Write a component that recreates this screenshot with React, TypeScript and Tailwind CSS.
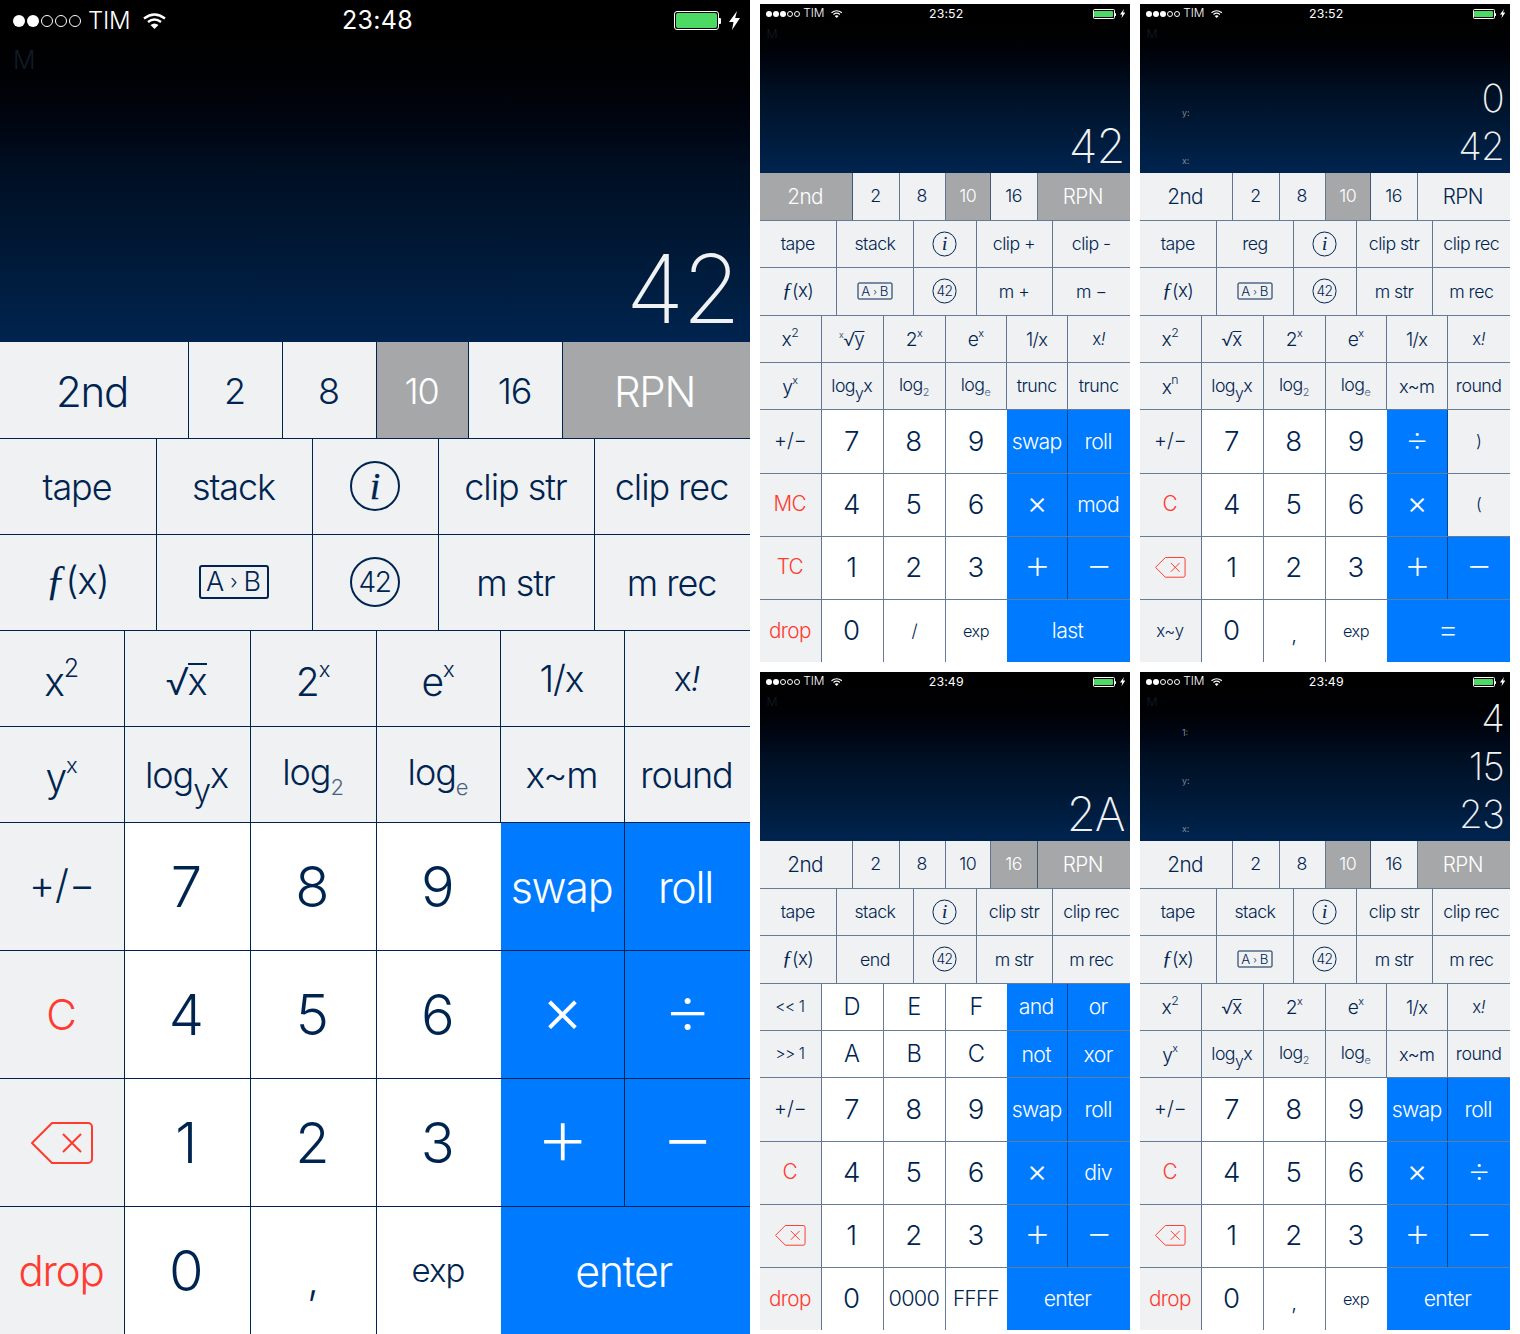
import React, { ReactNode } from "react";

type Kind = "fn" | "num" | "op" | "sel" | "red";
type C = [Kind, ReactNode, string?];

const KIND: Record<Kind, string> = {
  fn: "bg-[#f0f1f3] text-[#002450]",
  num: "bg-white text-[#002450]",
  op: "bg-[#007aff] text-white",
  sel: "bg-[#a6a7a9] text-white",
  red: "bg-[#f0f1f3] text-[#ff3b30]",
};

const W_TOP = ["w-[189px]", "w-[94px]", "w-[94px]", "w-[92px]", "w-[94px]", "flex-1"];
const W_5 = ["w-[157px]", "w-[156px]", "w-[126px]", "w-[156px]", "flex-1"];
const W_6 = ["w-[125px]", "w-[126px]", "w-[126px]", "w-[124px]", "w-[124px]", "flex-1"];
const W_LAST = ["w-[125px]", "w-[126px]", "w-[126px]", "w-[124px]", "flex-1"];

const Sup = ({ children, s = "text-[22px]" }: { children: ReactNode; s?: string }) => (
  <span className={`relative -top-[19px] ${s}`}>{children}</span>
);
const Sub = ({ children, s = "text-[22px]", t = "top-[10px]", c = "" }: { children: ReactNode; s?: string; t?: string; c?: string }) => (
  <span className={`relative ${t} ${s} ${c}`}>{children}</span>
);

const Info = () => (
  <span className="flex h-[50px] w-[50px] -translate-y-[1px] items-center justify-center rounded-full border-2 border-current">
    <span className="[font-family:'Liberation_Serif',serif] text-[38px] font-normal italic [-webkit-text-stroke:0.3px_currentColor]">i</span>
  </span>
);
const Circle42 = () => (
  <span className="flex h-[50px] w-[50px] -translate-y-[1px] items-center justify-center rounded-full border-2 border-current text-[28px] tracking-[-0.05em]">
    42
  </span>
);
const AB = () => (
  <span className="flex h-[34px] w-[70px] -translate-y-[1px] items-center justify-center gap-[6px] rounded-[3px] border-2 border-current text-[27px] tracking-normal">
    A<span className="text-[20px]">›</span>B
  </span>
);
const Fx = () => (
  <span className="-translate-y-[3px] text-[38px]">
    <span className="[font-family:'Liberation_Serif',serif] text-[42px] italic">ƒ</span>(x)
  </span>
);
const Sqrt = ({ v }: { v: string }) => (
  <span className="flex items-baseline text-[38px]">
    √<span className="-ml-[1px] inline-block border-t-2 border-current leading-[32px]">{v}</span>
  </span>
);
const Backspace = () => (
  <svg width="62" height="42" viewBox="0 0 62 42" fill="none" stroke="#ff3b30" strokeWidth="2">
    <path d="M1 21 L21 1 H57 a4 4 0 0 1 4 4 V37 a4 4 0 0 1 -4 4 H21 Z" strokeLinejoin="round" />
    <path d="M32 12 L50 30 M50 12 L32 30" />
  </svg>
);

const Wifi = () => (
  <svg width="23" height="16" viewBox="0 0 23 16" className="text-white">
    <path d="M1 5.5 Q11.5 -2.5 22 5.5" fill="none" stroke="currentColor" strokeWidth="2.4" />
    <path d="M5 9 Q11.5 4 18 9" fill="none" stroke="currentColor" strokeWidth="2.4" />
    <path d="M7.5 12 Q11.5 9 15.5 12 L11.5 16 Z" fill="currentColor" />
  </svg>
);
const Bolt = () => (
  <svg width="11" height="19" viewBox="0 0 11 19" fill="white">
    <path d="M8 0 L0 11 H4.5 L3 19 L11 7 H6.2 Z" />
  </svg>
);

const StatusBar = ({ dots, time }: { dots: number; time: string }) => (
  <div className="grid h-[40px] grid-cols-3 items-center pl-[13px] pr-[10px] pt-[1px] text-white">
    <div className="flex items-center">
      <div className="flex gap-[2px]">
        {[0, 1, 2, 3, 4].map((i) => (
          <span
            key={i}
            className={
              i < dots
                ? "h-[12px] w-[12px] rounded-full bg-white"
                : "h-[12px] w-[12px] rounded-full border border-white"
            }
          />
        ))}
      </div>
      <span className="ml-[7px] text-[24px] font-light tracking-[-0.01em]">TIM</span>
      <span className="ml-[13px] flex"><Wifi /></span>
    </div>
    <div className="pl-[2px] text-center text-[25px] font-normal tracking-[0.01em]">{time}</div>
    <div className="flex items-center justify-end gap-[8px]">
      <div className="flex items-center">
        <div className="h-[19px] w-[45px] rounded-[3px] border border-white p-[1px]">
          <div className="h-full w-full rounded-[2px] bg-[#4cd964]" />
        </div>
        <div className="h-[6px] w-[2px] rounded-r-[1px] bg-white" />
      </div>
      <Bolt />
    </div>
  </div>
);

type Line = { label?: string; value: string };

const Display = ({
  dots,
  time,
  lines,
  big,
}: {
  dots: number;
  time: string;
  lines: Line[];
  big?: boolean;
}) => (
  <div className="flex h-[342px] flex-col bg-gradient-to-b from-black via-[#000f22] via-50% to-[#00244f]">
    <StatusBar dots={dots} time={time} />
    <div className="pl-[13px] text-[25px] font-light leading-[40px] text-[#121b27]">M</div>
    <div className="flex min-h-0 flex-1 flex-col justify-end pb-[5px]">
      {lines.map((l) => (
        <div key={l.value} className="flex h-[97px] shrink-0 items-center justify-between">
          <span className="mb-[6px] self-end pl-[85px] text-[18px] font-normal text-[#7d8b9c]">{l.label}</span>
          <span
            className={
              big
                ? "pr-[11px] text-[95px] font-extralight leading-none tracking-[-0.02em] text-[#f0f1f3]"
                : "pr-[12px] text-[78px] font-extralight leading-none tracking-[-0.02em] text-[#f0f1f3]"
            }
          >
            {l.value}
          </span>
        </div>
      ))}
    </div>
  </div>
);

const Row = ({
  cells,
  widths,
  h,
  line,
  first,
  blueJoin,
}: {
  cells: C[];
  widths: string[];
  h: string;
  line: string;
  first?: boolean;
  blueJoin?: boolean;
}) => (
  <div className={`flex ${h} ${first ? "" : `border-t ${line}`}`}>
    {cells.map(([k, c, cls], i) => {
      const last = i === cells.length - 1;
      const next = cells[i + 1];
      const noDiv = last || (next && next[0] === "op" && k !== "op" && blueJoin);
      return (
        <div
          key={i}
          className={`flex items-center justify-center overflow-visible whitespace-nowrap leading-none ${widths[i]} ${KIND[k]} ${
            noDiv ? "" : `border-r ${line}`
          }`}
        >
          <span className={`flex items-baseline justify-center tracking-[-0.03em] ${cls ?? ""}`}>{c}</span>
        </div>
      );
    })}
  </div>
);

const T2 = "text-[42px] translate-y-[2px] -translate-x-[2px]";
const T1 = "text-[36px] -translate-x-[1px]";
const TB = "text-[36px] translate-y-[1px] -translate-x-[1px]";
const N = "text-[56px] -translate-x-[2px]";
const OPW = "text-[43px] translate-y-[1px] -translate-x-[1px]";
const MULC = "text-[64px] font-light -translate-y-[5px] -translate-x-[1px]";
const DIVC = "text-[78px] font-extralight -translate-y-[7px] -translate-x-[1px]";
const ADDC = "text-[86px] font-extralight -translate-y-[8px] -translate-x-[1px]";

const top = (sel: string[]): C[] =>
  ["2nd", "2", "8", "10", "16", "RPN"].map((t) => [
    sel.includes(t) ? "sel" : "fn",
    t,
    t === "2nd" || t === "RPN" ? T2 : TB,
  ]);

const r5 = (a: ReactNode, b: ReactNode, c: ReactNode, d: ReactNode, e: ReactNode): C[] => [
  ["fn", a, T1],
  ["fn", b, T1],
  ["fn", c, T1],
  ["fn", d, T1],
  ["fn", e, T1],
];

const PW = "text-[39px] translate-y-[3px] -translate-x-[1px]";

const powers = (sq: ReactNode): C[] => [
  ["fn", <>x<Sup s="text-[25px]">2</Sup></>, PW],
  ["fn", sq, "translate-y-[2px] -translate-x-[1px]"],
  ["fn", <>2<Sup>x</Sup></>, PW],
  ["fn", <>e<Sup>x</Sup></>, PW],
  ["fn", "1/x", "text-[37px] -translate-x-[1px]"],
  ["fn", <>x<span className="italic">!</span></>, "text-[34px] -translate-x-[1px]"],
];

const logs = (a: C, e: C, f: C): C[] => [
  a,
  ["fn", <>log<Sub s="text-[32px]" t="top-[14px]">y</Sub>x</>, "text-[36px] -translate-x-[1px]"],
  ["fn", <>log<Sub c="opacity-70">2</Sub></>, "text-[36px] -translate-y-[3px] -translate-x-[1px]"],
  ["fn", <>log<Sub c="opacity-70">e</Sub></>, "text-[36px] -translate-y-[3px] -translate-x-[1px]"],
  e,
  f,
];

const yx: C = ["fn", <>y<Sup>x</Sup></>, PW];
const xm: C = ["fn", "x~m", "text-[37px] -translate-x-[1px]"];
const round: C = ["fn", "round", "text-[36px] -translate-x-[1px]"];
const trunc: C = ["fn", "trunc", "text-[36px] -translate-x-[1px]"];

const d3 = (a: string, b: string, c: string): C[] => [
  ["num", a, N],
  ["num", b, N],
  ["num", c, N],
];
const PM: C = ["fn", "+/−", "text-[40px] -translate-y-[2px] tracking-normal"];
const CC: C = ["red", "C", "text-[42px] -translate-x-[1px]"];
const BK: C = ["red", <Backspace />];
const MUL: C = ["op", "×", MULC];
const DIV: C = ["op", "÷", DIVC];
const PLUS: C = ["op", "+", ADDC];
const MINUS: C = ["op", "−", ADDC];
const SWAP: C = ["op", "swap", OPW];
const ROLL: C = ["op", "roll", "text-[43px] translate-y-[1px] -translate-x-[2px]"];
const DROP: C = ["red", "drop", "text-[42px] -translate-x-[1px]"];
const COMMA: C = ["num", ",", "text-[42px] translate-y-[8px] -translate-x-[1px]"];
const EXP: C = ["num", "exp", "text-[33px] -translate-x-[1px]"];
const ZERO: C = ["num", "0", N];
const ENTER: C = ["op", "enter", "text-[43px] translate-y-[1px] -translate-x-[2px]"];

const Phone = ({
  small,
  dots,
  time,
  lines,
  big,
  sel,
  r2,
  r3,
  r4,
  r5: rr5,
  keys,
}: {
  small?: boolean;
  dots: number;
  time: string;
  lines: Line[];
  big?: boolean;
  sel: string[];
  r2: C[];
  r3: C[];
  r4: C[];
  r5: C[];
  keys: [C[], C[], C[], C[]];
}) => {
  const line = small ? "border-[#002450]/60" : "border-[#002450]";
  return (
    <div className={`h-[1334px] w-[750px] overflow-hidden ${small ? "[zoom:0.4933]" : ""}`}>
      <Display dots={dots} time={time} lines={lines} big={big} />
      <Row first cells={top(sel)} widths={W_TOP} h="h-[96px]" line={line} />
      <Row cells={r2} widths={W_5} h="h-[96px]" line={line} />
      <Row cells={r3} widths={W_5} h="h-[96px]" line={line} />
      <Row cells={r4} widths={W_6} h="h-[96px]" line={line} blueJoin />
      <Row cells={rr5} widths={W_6} h="h-[96px]" line={line} blueJoin />
      <Row cells={keys[0]} widths={W_6} h="h-[128px]" line={line} blueJoin />
      <Row cells={keys[1]} widths={W_6} h="h-[128px]" line={line} blueJoin />
      <Row cells={keys[2]} widths={W_6} h="h-[128px]" line={line} blueJoin />
      <Row cells={keys[3]} widths={W_LAST} h="h-[128px]" line={line} blueJoin />
    </div>
  );
};

const r2std = r5("tape", "stack", <Info />, "clip str", "clip rec");
const r3std = r5(<Fx />, <AB />, <Circle42 />, "m str", "m rec");
const r4std = powers(<Sqrt v="x" />);
const r5std = logs(yx, xm, round);
const keysStd: [C[], C[], C[], C[]] = [
  [PM, ...d3("7", "8", "9"), SWAP, ROLL],
  [CC, ...d3("4", "5", "6"), MUL, DIV],
  [BK, ...d3("1", "2", "3"), PLUS, MINUS],
  [DROP, ZERO, COMMA, EXP, ENTER],
];

export default function App() {
  return (
    <div className="flex h-[1334px] w-[1520px] gap-[10px] bg-white font-light [font-family:Inter,sans-serif]">
      <Phone
        dots={2}
        time="23:48"
        big
        lines={[{ value: "42" }]}
        sel={["10", "RPN"]}
        r2={r2std}
        r3={r3std}
        r4={r4std}
        r5={r5std}
        keys={keysStd}
      />
      <div className="grid grid-cols-[370px_370px] grid-rows-[658px_658px] gap-[10px] pt-[4px]">
        <Phone
          small
          dots={3}
          time="23:52"
          big
          lines={[{ value: "42" }]}
          sel={["2nd", "10", "RPN"]}
          r2={r5("tape", "stack", <Info />, "clip +", "clip -")}
          r3={r5(<Fx />, <AB />, <Circle42 />, "m +", "m −")}
          r4={powers(
            <span className="flex items-baseline">
              <span className="relative -top-[16px] text-[18px]">x</span>
              <Sqrt v="y" />
            </span>
          )}
          r5={logs(yx, trunc, trunc)}
          keys={[
            [PM, ...d3("7", "8", "9"), SWAP, ROLL],
            [["red", "MC", "text-[42px] -translate-x-[1px]"], ...d3("4", "5", "6"), MUL, ["op", "mod", "text-[43px] -translate-x-[2px]"]],
            [["red", "TC", "text-[42px] -translate-x-[1px]"], ...d3("1", "2", "3"), PLUS, MINUS],
            [DROP, ZERO, ["num", "/", "text-[36px]"], EXP, ["op", "last", "text-[43px] -translate-x-[2px]"]],
          ]}
        />
        <Phone
          small
          dots={3}
          time="23:52"
          lines={[
            { label: "y:", value: "0" },
            { label: "x:", value: "42" },
          ]}
          sel={["10"]}
          r2={r5("tape", "reg", <Info />, "clip str", "clip rec")}
          r3={r3std}
          r4={r4std}
          r5={logs(["fn", <>x<Sup s="text-[25px]">n</Sup></>, PW], xm, round)}
          keys={[
            [PM, ...d3("7", "8", "9"), DIV, ["fn", ")", "text-[34px] -translate-x-[1px]"]],
            [CC, ...d3("4", "5", "6"), MUL, ["fn", "(", "text-[34px] -translate-x-[1px]"]],
            [BK, ...d3("1", "2", "3"), PLUS, MINUS],
            [["fn", "x~y", "text-[34px] -translate-x-[1px]"], ZERO, COMMA, EXP, ["op", "=", "text-[70px] font-extralight -translate-y-[5px] -translate-x-[2px]"]],
          ]}
        />
        <Phone
          small
          dots={2}
          time="23:49"
          big
          lines={[{ value: "2A" }]}
          sel={["16", "RPN"]}
          r2={r2std}
          r3={r5(<Fx />, "end", <Circle42 />, "m str", "m rec")}
          r4={[
            ["fn", "<< 1", "text-[32px] -translate-x-[1px]"],
            ...d3("D", "E", "F").map((c): C => [c[0], c[1], "text-[48px] -translate-x-[1px]"]),
            ["op", "and", "text-[43px] -translate-x-[2px]"],
            ["op", "or", "text-[43px] -translate-x-[2px]"],
          ]}
          r5={[
            ["fn", ">> 1", "text-[32px] -translate-x-[1px]"],
            ...d3("A", "B", "C").map((c): C => [c[0], c[1], "text-[48px] -translate-x-[1px]"]),
            ["op", "not", "text-[43px] -translate-x-[2px]"],
            ["op", "xor", "text-[43px] -translate-x-[2px]"],
          ]}
          keys={[
            [PM, ...d3("7", "8", "9"), SWAP, ROLL],
            [CC, ...d3("4", "5", "6"), MUL, ["op", "div", "text-[43px] -translate-x-[2px]"]],
            [BK, ...d3("1", "2", "3"), PLUS, MINUS],
            [DROP, ZERO, ["num", "0000", "text-[44px] -translate-x-[1px]"], ["num", "FFFF", "text-[42px] -translate-x-[1px]"], ENTER],
          ]}
        />
        <Phone
          small
          dots={2}
          time="23:49"
          lines={[
            { label: "1:", value: "4" },
            { label: "y:", value: "15" },
            { label: "x:", value: "23" },
          ]}
          sel={["10", "RPN"]}
          r2={r2std}
          r3={r3std}
          r4={r4std}
          r5={r5std}
          keys={keysStd}
        />
      </div>
    </div>
  );
}
